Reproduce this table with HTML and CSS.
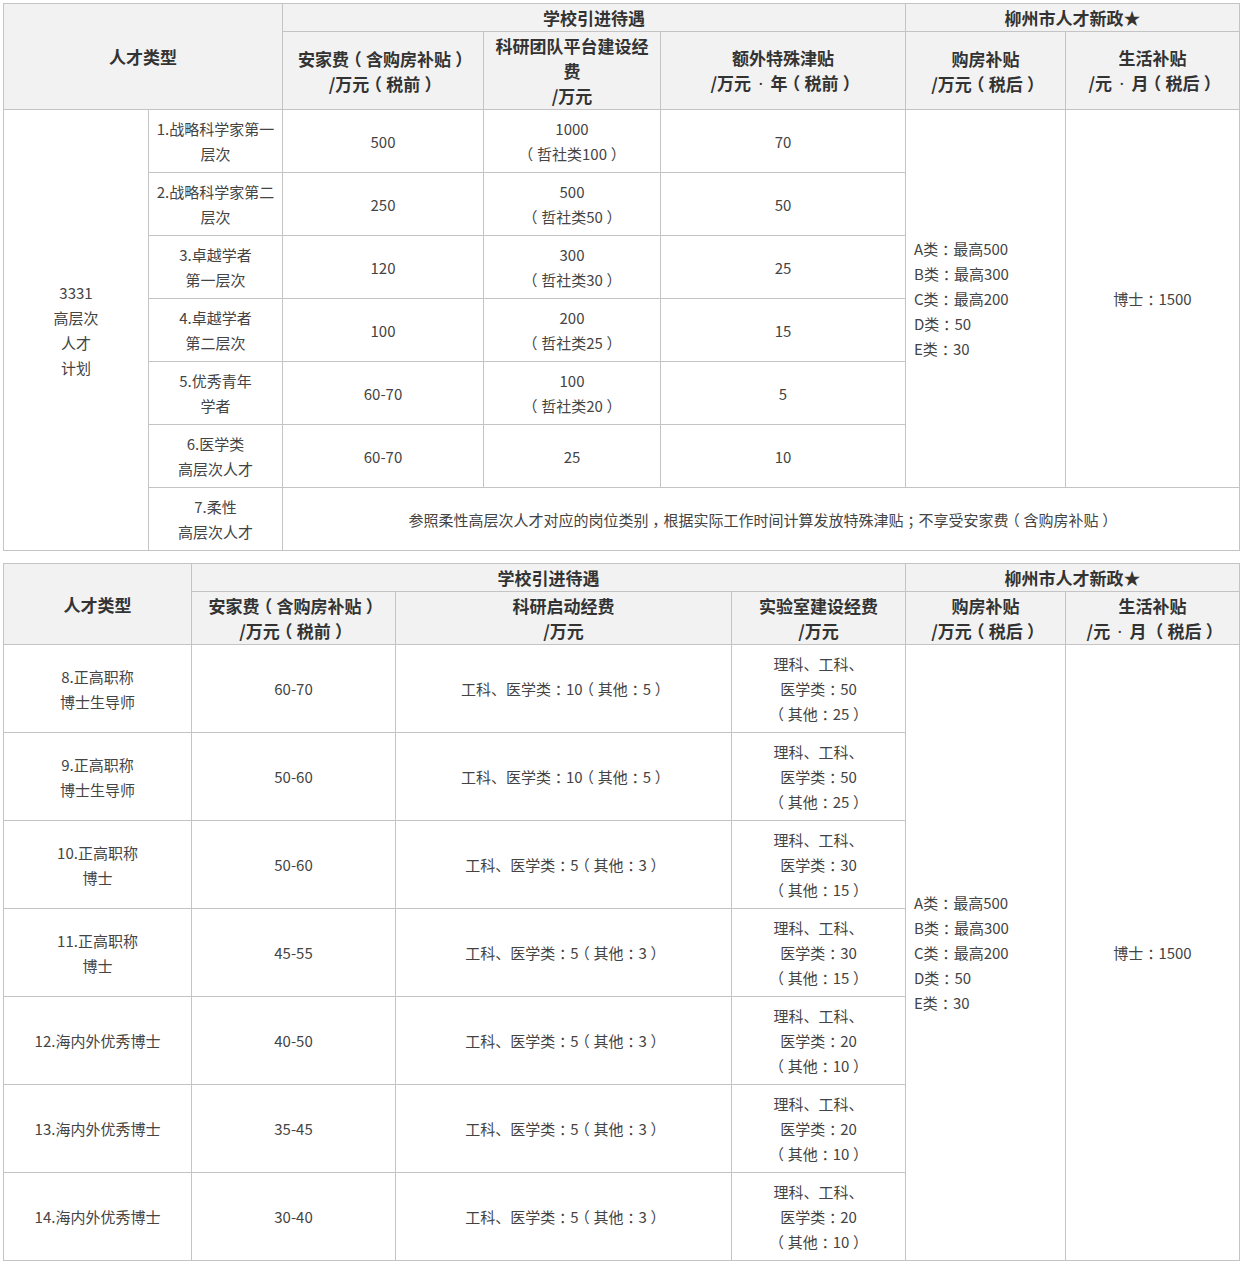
FILE: index.html
```html
<!DOCTYPE html>
<html lang="zh-CN">
<head>
<meta charset="utf-8">
<title>人才引进待遇</title>
<link rel="stylesheet" href="styles.css">
</head>
<body>
<table class="grid t1">
  <colgroup>
    <col class="c145"><col class="c134"><col class="c201"><col class="c177"><col class="c245"><col class="c160"><col class="c174">
  </colgroup>
  <tr class="h1">
    <th colspan="2" rowspan="2">人才类型</th>
    <th colspan="3">学校引进待遇</th>
    <th colspan="2">柳州市人才新政★</th>
  </tr>
  <tr class="h2a">
    <th>安家费<span class="p">（</span>含购房补贴<span class="p">）</span><br>/万元<span class="p">（</span>税前<span class="p">）</span></th>
    <th>科研团队平台建设经费<br>/万元</th>
    <th>额外特殊津贴<br>/万元<span class="dot"> · </span>年<span class="p">（</span>税前<span class="p">）</span></th>
    <th>购房补贴<br>/万元<span class="p">（</span>税后<span class="p">）</span></th>
    <th>生活补贴<br>/元<span class="dot"> · </span>月<span class="p">（</span>税后<span class="p">）</span></th>
  </tr>
  <tr class="r1">
    <td rowspan="7">3331<br>高层次<br>人才<br>计划</td>
    <td>1.战略科学家第一层次</td>
    <td>500</td>
    <td>1000<br><span class="p">（</span>哲社类100<span class="p">）</span></td>
    <td>70</td>
    <td rowspan="6" class="left">A类<span class="p">：</span>最高500<br>B类<span class="p">：</span>最高300<br>C类<span class="p">：</span>最高200<br>D类<span class="p">：</span>50<br>E类<span class="p">：</span>30</td>
    <td rowspan="6">博士<span class="p">：</span>1500</td>
  </tr>
  <tr class="r1">
    <td>2.战略科学家第二层次</td>
    <td>250</td>
    <td>500<br><span class="p">（</span>哲社类50<span class="p">）</span></td>
    <td>50</td>
  </tr>
  <tr class="r1">
    <td>3.卓越学者<br>第一层次</td>
    <td>120</td>
    <td>300<br><span class="p">（</span>哲社类30<span class="p">）</span></td>
    <td>25</td>
  </tr>
  <tr class="r1">
    <td>4.卓越学者<br>第二层次</td>
    <td>100</td>
    <td>200<br><span class="p">（</span>哲社类25<span class="p">）</span></td>
    <td>15</td>
  </tr>
  <tr class="r1">
    <td>5.优秀青年<br>学者</td>
    <td>60-70</td>
    <td>100<br><span class="p">（</span>哲社类20<span class="p">）</span></td>
    <td>5</td>
  </tr>
  <tr class="r1">
    <td>6.医学类<br>高层次人才</td>
    <td>60-70</td>
    <td>25</td>
    <td>10</td>
  </tr>
  <tr class="r1">
    <td>7.柔性<br>高层次人才</td>
    <td colspan="5">参照柔性高层次人才对应的岗位类别<span class="p">，</span>根据实际工作时间计算发放特殊津贴<span class="p">；</span>不享受安家费<span class="p">（</span>含购房补贴<span class="p">）</span></td>
  </tr>
</table>

<table class="grid t2">
  <colgroup>
    <col class="c188"><col class="c204"><col class="c336"><col class="c174"><col class="c160"><col class="c174">
  </colgroup>
  <tr class="h1">
    <th rowspan="2">人才类型</th>
    <th colspan="3">学校引进待遇</th>
    <th colspan="2">柳州市人才新政★</th>
  </tr>
  <tr class="h2b">
    <th>安家费<span class="p">（</span>含购房补贴<span class="p">）</span><br>/万元<span class="p">（</span>税前<span class="p">）</span></th>
    <th>科研启动经费<br>/万元</th>
    <th>实验室建设经费<br>/万元</th>
    <th>购房补贴<br>/万元<span class="p">（</span>税后<span class="p">）</span></th>
    <th>生活补贴<br>/元<span class="dot"> · </span>月 <span class="p">（</span>税后<span class="p">）</span></th>
  </tr>
  <tr class="r2">
    <td>8.正高职称<br>博士生导师</td>
    <td>60-70</td>
    <td>工科、医学类<span class="p">：</span>10<span class="p">（</span>其他<span class="p">：</span>5<span class="p">）</span></td>
    <td>理科、工科、<br>医学类<span class="p">：</span>50<br><span class="p">（</span>其他<span class="p">：</span>25<span class="p">）</span></td>
    <td rowspan="7" class="left">A类<span class="p">：</span>最高500<br>B类<span class="p">：</span>最高300<br>C类<span class="p">：</span>最高200<br>D类<span class="p">：</span>50<br>E类<span class="p">：</span>30</td>
    <td rowspan="7">博士<span class="p">：</span>1500</td>
  </tr>
  <tr class="r2">
    <td>9.正高职称<br>博士生导师</td>
    <td>50-60</td>
    <td>工科、医学类<span class="p">：</span>10<span class="p">（</span>其他<span class="p">：</span>5<span class="p">）</span></td>
    <td>理科、工科、<br>医学类<span class="p">：</span>50<br><span class="p">（</span>其他<span class="p">：</span>25<span class="p">）</span></td>
  </tr>
  <tr class="r2">
    <td>10.正高职称<br>博士</td>
    <td>50-60</td>
    <td>工科、医学类<span class="p">：</span>5<span class="p">（</span>其他<span class="p">：</span>3<span class="p">）</span></td>
    <td>理科、工科、<br>医学类<span class="p">：</span>30<br><span class="p">（</span>其他<span class="p">：</span>15<span class="p">）</span></td>
  </tr>
  <tr class="r2">
    <td>11.正高职称<br>博士</td>
    <td>45-55</td>
    <td>工科、医学类<span class="p">：</span>5<span class="p">（</span>其他<span class="p">：</span>3<span class="p">）</span></td>
    <td>理科、工科、<br>医学类<span class="p">：</span>30<br><span class="p">（</span>其他<span class="p">：</span>15<span class="p">）</span></td>
  </tr>
  <tr class="r2">
    <td>12.海内外优秀博士</td>
    <td>40-50</td>
    <td>工科、医学类<span class="p">：</span>5<span class="p">（</span>其他<span class="p">：</span>3<span class="p">）</span></td>
    <td>理科、工科、<br>医学类<span class="p">：</span>20<br><span class="p">（</span>其他<span class="p">：</span>10<span class="p">）</span></td>
  </tr>
  <tr class="r2">
    <td>13.海内外优秀博士</td>
    <td>35-45</td>
    <td>工科、医学类<span class="p">：</span>5<span class="p">（</span>其他<span class="p">：</span>3<span class="p">）</span></td>
    <td>理科、工科、<br>医学类<span class="p">：</span>20<br><span class="p">（</span>其他<span class="p">：</span>10<span class="p">）</span></td>
  </tr>
  <tr class="r2">
    <td>14.海内外优秀博士</td>
    <td>30-40</td>
    <td>工科、医学类<span class="p">：</span>5<span class="p">（</span>其他<span class="p">：</span>3<span class="p">）</span></td>
    <td>理科、工科、<br>医学类<span class="p">：</span>20<br><span class="p">（</span>其他<span class="p">：</span>10<span class="p">）</span></td>
  </tr>
</table>
</body>
</html>
```

FILE: styles.css
```css
html, body {
  background: #ffffff;
}
body {
  margin: 3px;
  font-family: "Microsoft YaHei", "Noto Sans CJK SC", "Noto Sans", sans-serif;
  color: #444444;
}
.grid {
  border-collapse: collapse;
  table-layout: fixed;
  width: 1237px;
  font-size: 15px;
  line-height: 25px;
}
.t2 {
  margin-top: 12px;
}
.grid th,
.grid td {
  border: 1px solid #c4c4c4;
  padding: 0 5px;
  text-align: center;
  vertical-align: middle;
}
.grid th {
  background: #f2f2f2;
  color: #333333;
  font-weight: bold;
  font-size: 17px;
}
.grid td.left {
  text-align: left;
  padding-left: 8px;
}
/* full-width punctuation drawn centred in its em box:
   half-width glyph form plus a quarter em on each side */
.p {
  font-feature-settings: "halt" 1;
  padding: 0 0.25em;
}
/* narrow latin middle dot, as in the reference */
.dot {
  font-family: "Noto Sans", "Liberation Sans", sans-serif;
  font-weight: normal;
  padding: 0 3px;
}
.h1 { height: 28px; }
.h2a { height: 78px; }
.h2b { height: 53px; }
.r1 { height: 63px; }
.r2 { height: 88px; }

.c145 { width: 145px; }
.c134 { width: 134px; }
.c201 { width: 201px; }
.c177 { width: 177px; }
.c245 { width: 245px; }
.c160 { width: 160px; }
.c174 { width: 174px; }
.c188 { width: 188px; }
.c204 { width: 204px; }
.c336 { width: 336px; }
```
